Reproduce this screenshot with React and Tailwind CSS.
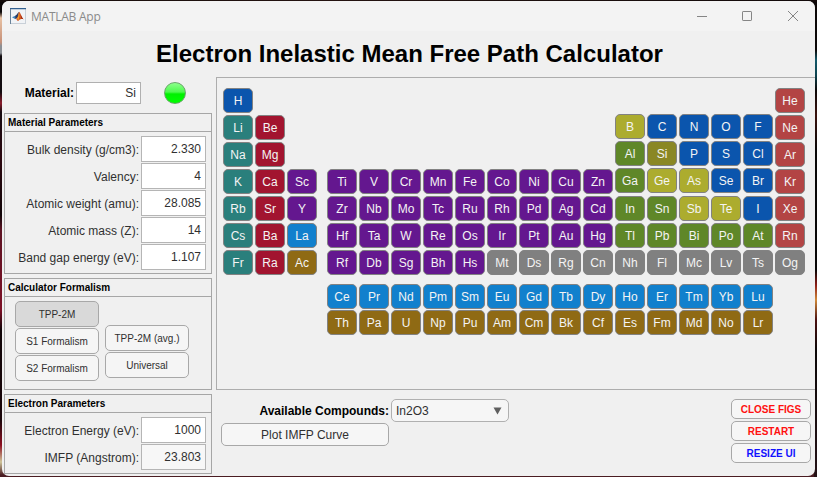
import React from "react";

const TONES = {
  alkali: "bg-[#2a7f7c]",
  earth: "bg-[#a2142f]",
  metal: "bg-[#64178f]",
  lanth: "bg-[#1180cd]",
  actin: "bg-[#8f6a14]",
  post: "bg-[#5f8728]",
  semi: "bg-[#acac2e]",
  picked: "bg-[#8a8724]",
  non: "bg-[#0b55ad]",
  noble: "bg-[#b34444]",
  unknown: "bg-[#808080]",
};

// One row per period; "symbol:tone", "-" is an empty cell, "|" the narrow gap after group 3.
const PERIODS = [
  "H:non - - | - - - - - - - - - - - - - - He:noble",
  "Li:alkali Be:earth - | - - - - - - - - - B:semi C:non N:non O:non F:non Ne:noble",
  "Na:alkali Mg:earth - | - - - - - - - - - Al:post Si:picked P:non S:non Cl:non Ar:noble",
  "K:alkali Ca:earth Sc:metal | Ti:metal V:metal Cr:metal Mn:metal Fe:metal Co:metal Ni:metal Cu:metal Zn:metal Ga:post Ge:semi As:semi Se:non Br:non Kr:noble",
  "Rb:alkali Sr:earth Y:metal | Zr:metal Nb:metal Mo:metal Tc:metal Ru:metal Rh:metal Pd:metal Ag:metal Cd:metal In:post Sn:post Sb:semi Te:semi I:non Xe:noble",
  "Cs:alkali Ba:earth La:lanth | Hf:metal Ta:metal W:metal Re:metal Os:metal Ir:metal Pt:metal Au:metal Hg:metal Tl:post Pb:post Bi:post Po:post At:post Rn:noble",
  "Fr:alkali Ra:earth Ac:actin | Rf:metal Db:metal Sg:metal Bh:metal Hs:metal Mt:unknown Ds:unknown Rg:unknown Cn:unknown Nh:unknown Fl:unknown Mc:unknown Lv:unknown Ts:unknown Og:unknown",
].map((row) => row.split(" "));

const LANTHANIDES = "Ce Pr Nd Pm Sm Eu Gd Tb Dy Ho Er Tm Yb Lu".split(" ");
const ACTINIDES = "Th Pa U Np Pu Am Cm Bk Cf Es Fm Md No Lr".split(" ");

function Element({ symbol, tone, raised }) {
  return (
    <button
      className={`flex h-[25px] w-[30px] items-center justify-center rounded-[5px] border border-[#828282] text-[12px] leading-none text-[#f4f4f4] ${TONES[tone]} ${raised ? "-mt-px" : ""}`}
    >
      {symbol}
    </button>
  );
}

function PeriodicTable() {
  return (
    <section className="h-[313px] border-y border-l border-[#adadad] pt-[10px] pl-[6px]">
      <div className="grid grid-cols-[30px_30px_30px_6px_repeat(15,30px)] gap-[2px]">
        {PERIODS.flatMap((row, r) =>
          row.map((cell, c) => {
            if (cell === "-" || cell === "|") return <span key={`${r}-${c}`} />;
            const [symbol, tone] = cell.split(":");
            const raised = c >= 13 && c <= 17 && r <= 3;
            return <Element key={symbol} symbol={symbol} tone={tone} raised={raised} />;
          })
        )}
      </div>
      <div className="mt-[9px] ml-[104px] flex flex-col gap-px">
        <div className="flex gap-[2px]">
          {LANTHANIDES.map((s) => <Element key={s} symbol={s} tone="lanth" />)}
        </div>
        <div className="flex gap-[2px]">
          {ACTINIDES.map((s) => <Element key={s} symbol={s} tone="actin" />)}
        </div>
      </div>
    </section>
  );
}

function Panel({ title, className, children }) {
  return (
    <section className={`w-[208px] border border-[#a6a6a6] ${className}`}>
      <h2 className="h-[18px] border-b border-[#a6a6a6] pl-[3px] text-[10px] leading-[17px] font-bold whitespace-nowrap text-black">
        {title}
      </h2>
      {children}
    </section>
  );
}

function Field({ label, value, muted }) {
  return (
    <div className="flex h-[26px] items-center justify-end gap-[2px] pr-[5px]">
      <label className="pt-px text-[12px] whitespace-nowrap text-[#303030]">{label}</label>
      <div
        className={`flex h-[26px] w-[65px] items-center justify-end border border-[#b5b5b5] pr-[4px] text-[12px] text-[#303030] ${muted ? "bg-[#f7f7f7]" : "bg-white"}`}
      >
        {value}
      </div>
    </div>
  );
}

function Button({ className, children }) {
  return (
    <button className={`flex items-center justify-center rounded-[5px] border border-[#a8a8a8] whitespace-nowrap ${className}`}>
      {children}
    </button>
  );
}

function Logo() {
  return (
    <svg width="16" height="16" viewBox="0 0 16 16">
      <rect x="0.5" y="0.5" width="15" height="15" fill="#f1f3f6" stroke="#c9d0d8" />
      <path d="M0 .6H16" stroke="#315f8f" strokeWidth="1.2" />
      <path d="M.5 1V16" stroke="#6a8299" />
      <path d="M2 9.3 5.2 7.8 7 9.2 5 11Z" fill="#3f86c0" />
      <path d="M5.2 7.8C7 7 7.6 4.8 9 3.8L8.2 9 5.4 11.2Z" fill="#2b3d66" />
      <path d="M9 3.8C10.4 4.4 11.4 9 13.6 11.4 12 10.8 10 11 8 13.2L6 10.8C8 10 8.4 6 9 3.8Z" fill="#d4521d" />
      <path d="M9 4.4C9.8 6.5 9.6 9.5 8.2 12.4L7.2 10.4C8.4 9 8.6 6.5 9 4.4Z" fill="#f0a431" />
      <path d="M10.4 5.6C11.2 8 12 9.8 13.4 11.2L11.4 10.4Z" fill="#8f2416" />
    </svg>
  );
}

function TitleBar() {
  return (
    <header className="flex h-[30px] shrink-0 items-center bg-[#f3f3f3] pl-[8px] text-[#8a8a8a]">
      <Logo />
      <span className="ml-[5px] pt-[2px] font-['Open_Sans','Noto_Sans',sans-serif] text-[12px] leading-none tracking-[-0.25px]">MATLAB App</span>
      <svg className="ml-auto mr-[16px]" width="102" height="12" viewBox="0 0 102 12" fill="none" stroke="#858585">
        <path d="M0 6.5H10" />
        <rect x="45.5" y="1.5" width="9" height="9" rx="0.6" />
        <path d="M91 1 101 11M101 1 91 11" />
      </svg>
    </header>
  );
}

export default function App() {
  return (
    <div className="h-[477px] w-[817px] overflow-hidden bg-[linear-gradient(to_bottom,#0c0808_0,#0c0808_12px,#e8c2a4_18px,#c69078_42px,#8b8f94_46px,#8b8f94_53px,#120c10_56px,#120c10_92px,#8c1d2d_103px,#160b10_112px,#2c0810_160px,#100508_215px,#5d1424_230px,#7c1026_310px,#100508_330px,#1b070b_420px,#8d1022_445px,#cfc59a_462px,#4a1c22_475px)] font-['Liberation_Sans',Arial,sans-serif]">
      <div className="h-full bg-[linear-gradient(to_bottom,#0c0808_0,#0c0808_50px,#14596a_60px,#0d4450_75px,#0c0808_90px,#3a120d_115px,#080606_150px,#080606_270px,#8c1d18_285px,#d08a3a_300px,#4a1010_320px,#0c0808_350px,#241216_477px)] bg-[length:3px_100%] bg-right bg-no-repeat">
        <div className="h-full bg-[linear-gradient(to_right,#140c0a,#241310_40%,#120a0a)] bg-[length:100%_2px] bg-no-repeat pt-px pl-[2px]">
          <main className="flex h-[475px] w-[813px] flex-col overflow-hidden rounded-[7px] bg-[#f0f0f0]">
            <TitleBar />
            <h1 className="flex h-[45px] shrink-0 items-center justify-center pl-[2px] text-[24px] leading-none font-bold whitespace-nowrap text-black">
              Electron Inelastic Mean Free Path Calculator
            </h1>
            <div className="flex flex-1">
              <aside className="w-[214px] shrink-0 pt-[5px] pl-[2px]">
                <div className="flex h-[23px] items-center">
                  <label className="w-[72px] pt-px pr-[2px] text-right text-[12px] font-bold whitespace-nowrap text-black">
                    Material:
                  </label>
                  <div className="flex h-[22px] w-[65px] items-center justify-end border border-[#b0b0b0] bg-white pt-px pr-[4px] text-[12px] text-[#303030]">
                    Si
                  </div>
                  <div className="ml-[23px] size-[22px] rounded-full border border-[#6aa56a] bg-[linear-gradient(to_bottom,#8cff8c_0%,#4dfa4d_45%,#00f000_55%,#00ff00_100%)]" />
                </div>
                <Panel title="Material Parameters" className="mt-[9px] h-[161px]">
                  <div className="flex flex-col gap-px pt-[4px]">
                    <Field label="Bulk density (g/cm3):" value="2.330" />
                    <Field label="Valency:" value="4" />
                    <Field label="Atomic weight (amu):" value="28.085" />
                    <Field label="Atomic mass (Z):" value="14" />
                    <Field label="Band gap energy (eV):" value="1.107" />
                  </div>
                </Panel>
                <Panel title="Calculator Formalism" className="mt-[4px] h-[112px]">
                  <div className="flex gap-[6px] pt-[4px] pl-[10px] text-[10px] text-[#303030]">
                    <div className="flex flex-col gap-px">
                      <Button className="h-[26px] w-[84px] bg-[#d9d9d9]">TPP-2M</Button>
                      <Button className="h-[26px] w-[84px] bg-[#f5f5f5]">S1 Formalism</Button>
                      <Button className="h-[26px] w-[84px] bg-[#f5f5f5]">S2 Formalism</Button>
                    </div>
                    <div className="flex flex-col gap-px pt-[24px]">
                      <Button className="h-[26px] w-[84px] bg-[#f5f5f5]">TPP-2M (avg.)</Button>
                      <Button className="h-[26px] w-[84px] bg-[#f5f5f5]">Universal</Button>
                    </div>
                  </div>
                </Panel>
                <Panel title="Electron Parameters" className="mt-[4px] h-[80px]">
                  <div className="flex flex-col gap-px pt-[4px]">
                    <Field label="Electron Energy (eV):" value="1000" />
                    <Field label="IMFP (Angstrom):" value="23.803" muted />
                  </div>
                </Panel>
              </aside>
              <div className="flex-1 pt-px">
                <PeriodicTable />
                <div className="flex items-start justify-between pt-[9px] pr-[4px] pl-[5px]">
                  <div>
                    <div className="flex h-[23px] items-center gap-[2px]">
                      <label className="w-[168px] text-right text-[12px] font-bold whitespace-nowrap text-black">Available Compounds:</label>
                      <div className="flex h-[23px] w-[118px] items-center justify-between rounded-[5px] border border-[#b0b0b0] bg-[#f6f6f6] pr-[6px] pl-[4px] text-[12px] text-[#303030]">
                        In2O3
                        <svg width="9" height="8" viewBox="0 0 9 8"><path d="M.5.5H8.5L4.5 7.5Z" fill="#606060" /></svg>
                      </div>
                    </div>
                    <Button className="mt-px h-[23px] w-[168px] bg-[#f6f6f6] text-[12px] text-[#303030]">Plot IMFP Curve</Button>
                  </div>
                  <div className="flex flex-col gap-[2px] text-[10px] font-bold">
                    <Button className="h-[20px] w-[80px] bg-[#f6f6f6] pt-px text-[#ff1010]">CLOSE FIGS</Button>
                    <Button className="h-[20px] w-[80px] bg-[#f6f6f6] pt-px text-[#ff1010]">RESTART</Button>
                    <Button className="h-[20px] w-[80px] bg-[#f6f6f6] pt-px text-[#1010ff]">RESIZE UI</Button>
                  </div>
                </div>
              </div>
            </div>
          </main>
        </div>
      </div>
    </div>
  );
}
